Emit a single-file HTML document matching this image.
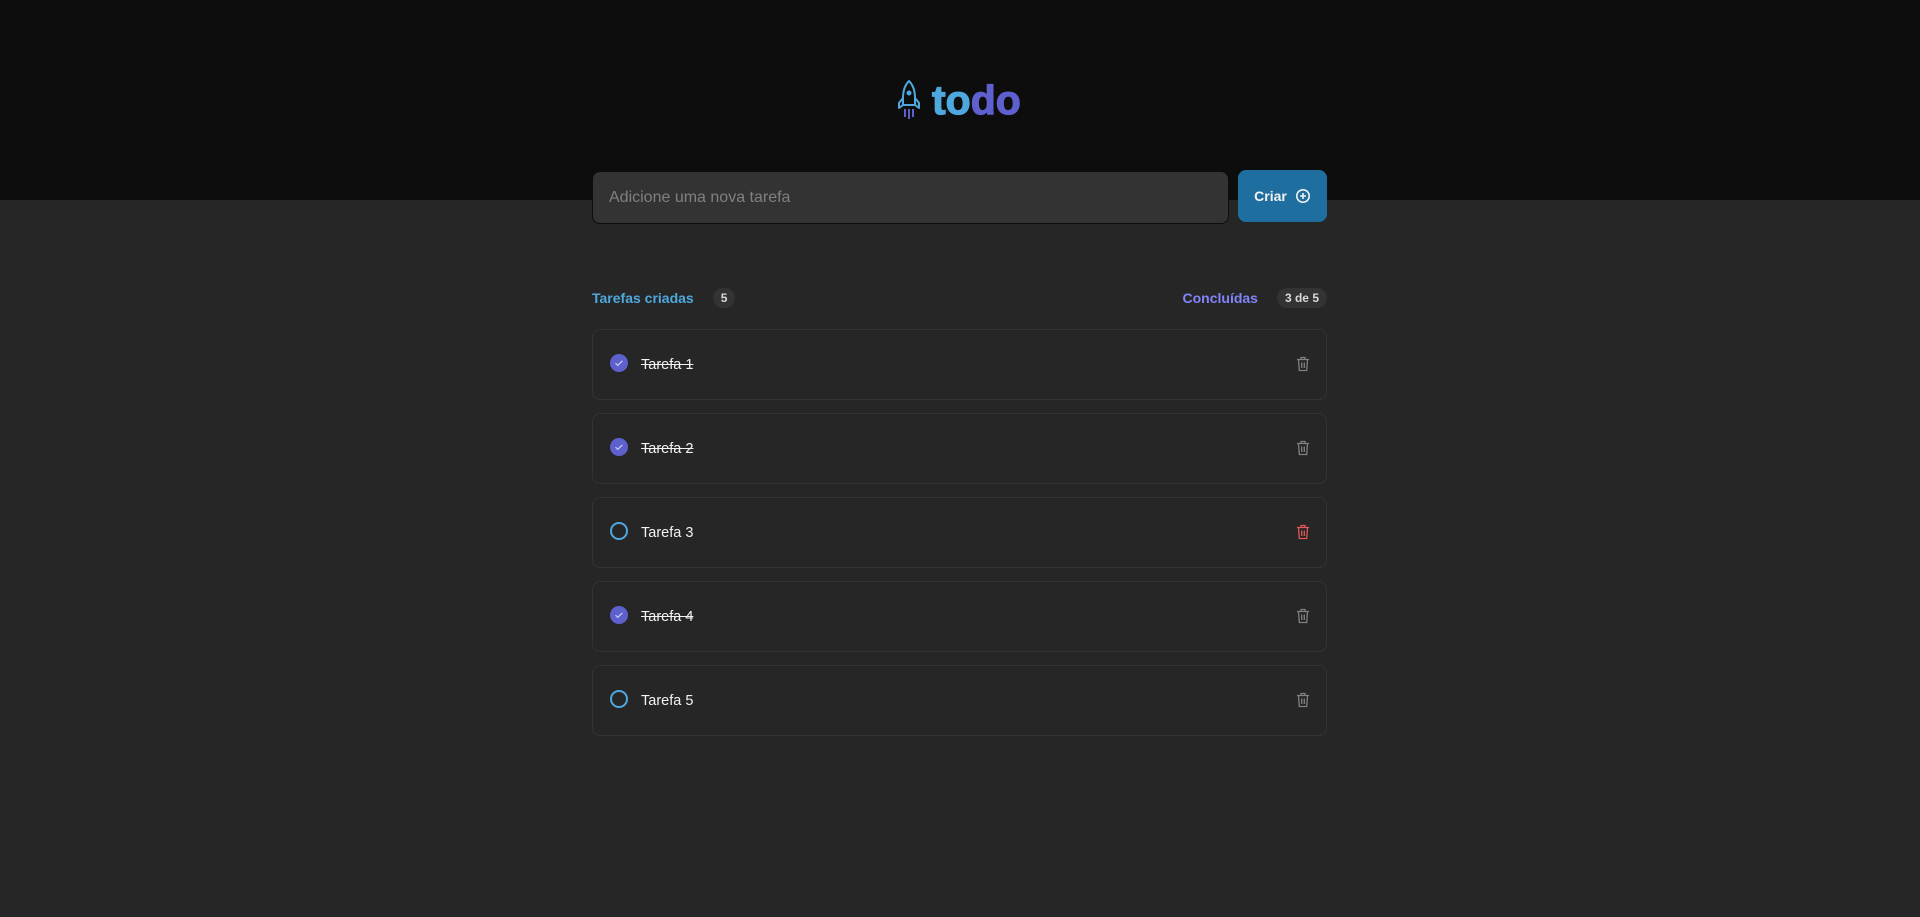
<!DOCTYPE html>
<html><head><meta charset="utf-8"><style>
*{box-sizing:border-box;margin:0;padding:0}
body{width:1920px;height:917px;background:#262626;font-family:"Liberation Sans",sans-serif;position:relative;overflow:hidden}
.hdr{position:absolute;left:0;top:0;width:1920px;height:200px;background:#0d0d0d}
.logo{position:absolute;left:897px;top:76px;display:flex;align-items:center}
.logo .t{font-size:41px;font-weight:900;letter-spacing:0px;margin-left:11px;line-height:48px;-webkit-text-stroke:1.2px currentColor}
.inp{position:absolute;left:592px;top:171px;width:637px;height:53px;background:#333;border:1px solid #0d0d0d;border-radius:8px;color:#808080;font-size:16px;padding:17px 16px}
.btn{position:absolute;left:1238px;top:170px;width:89px;height:52px;background:#1e6f9f;border-radius:8px;color:#f2f2f2;font-weight:700;font-size:14px;display:flex;align-items:center;justify-content:center;gap:8px}
.stats{position:absolute;top:288px;font-size:14px;font-weight:700;display:flex;align-items:center}
.badge{background:#333;color:#d9d9d9;border-radius:999px;font-size:12px;padding:3px 8px;margin-left:19px}
.card{position:absolute;left:592px;width:735px;height:71px;background:#262626;border:1px solid #333;border-radius:8px}
.chk{position:absolute;left:17px;top:24px;width:18px;height:18px;border-radius:50%}
.on{background:#5e60ce}
.off{border:2px solid #4ea8de}
.txt{position:absolute;left:48px;top:27px;color:#f2f2f2;font-size:14.5px}
.done{text-decoration:line-through}
.tr{position:absolute;left:703px;top:26px}
</style></head><body>
<div class="hdr"></div>
<div class="logo">
<svg width="24" height="42" viewBox="0 0 24 42" fill="none">
<path d="M12 2 C7 7 6 13 6 19 L6 26 L18 26 L18 19 C18 13 17 7 12 2Z" stroke="#4ea8de" stroke-width="2" stroke-linejoin="round"/>
<path d="M6 19 L2 24 L2 29 L6 26 M18 19 L22 24 L22 29 L18 26" stroke="#4ea8de" stroke-width="2" stroke-linejoin="round"/>
<circle cx="12" cy="14" r="2.5" fill="#4ea8de"/>
<path d="M8 30 V38 M12 30 V40 M16 30 V38" stroke="#5e60ce" stroke-width="2"/>
</svg>
<span class="t"><span style="color:#4ea8de">to</span><span style="color:#5e60ce">do</span></span>
</div>
<div class="inp">Adicione uma nova tarefa</div>
<div class="btn">Criar <svg width="16" height="16" viewBox="0 0 16 16" fill="none" stroke="#f2f2f2" stroke-width="1.6"><circle cx="8" cy="8" r="6.2"/><path d="M8 5v6M5 8h6"/></svg></div>
<div class="stats" style="left:592px;color:#4ea8de">Tarefas criadas<span class="badge">5</span></div>
<div class="stats" style="right:593px;color:#8284fa">Concluídas<span class="badge">3 de 5</span></div>

<div class="card" style="top:329px"><div class="chk on"><svg width="18" height="18" viewBox="0 0 18 18"><path d="M5.5 9.2l2.3 2.2 4.6-4.6" stroke="#c8c8f0" stroke-width="1.3" fill="none"/></svg></div><div class="txt done">Tarefa 1</div><svg class="tr" width="14" height="16" viewBox="0 0 14 16" fill="none" stroke="#808080" stroke-width="1.3"><path d="M1 3.5h12M5 3.5V1.5h4v2M2.5 3.5l.8 11h7.4l.8-11M5.7 6.5v5.5M8.3 6.5v5.5"/></svg></div>
<div class="card" style="top:413px"><div class="chk on"><svg width="18" height="18" viewBox="0 0 18 18"><path d="M5.5 9.2l2.3 2.2 4.6-4.6" stroke="#c8c8f0" stroke-width="1.3" fill="none"/></svg></div><div class="txt done">Tarefa 2</div><svg class="tr" width="14" height="16" viewBox="0 0 14 16" fill="none" stroke="#808080" stroke-width="1.3"><path d="M1 3.5h12M5 3.5V1.5h4v2M2.5 3.5l.8 11h7.4l.8-11M5.7 6.5v5.5M8.3 6.5v5.5"/></svg></div>
<div class="card" style="top:497px"><div class="chk off"></div><div class="txt">Tarefa 3</div><svg class="tr" width="14" height="16" viewBox="0 0 14 16" fill="none" stroke="#e25858" stroke-width="1.3"><path d="M1 3.5h12M5 3.5V1.5h4v2M2.5 3.5l.8 11h7.4l.8-11M5.7 6.5v5.5M8.3 6.5v5.5"/></svg></div>
<div class="card" style="top:581px"><div class="chk on"><svg width="18" height="18" viewBox="0 0 18 18"><path d="M5.5 9.2l2.3 2.2 4.6-4.6" stroke="#c8c8f0" stroke-width="1.3" fill="none"/></svg></div><div class="txt done">Tarefa 4</div><svg class="tr" width="14" height="16" viewBox="0 0 14 16" fill="none" stroke="#808080" stroke-width="1.3"><path d="M1 3.5h12M5 3.5V1.5h4v2M2.5 3.5l.8 11h7.4l.8-11M5.7 6.5v5.5M8.3 6.5v5.5"/></svg></div>
<div class="card" style="top:665px"><div class="chk off"></div><div class="txt">Tarefa 5</div><svg class="tr" width="14" height="16" viewBox="0 0 14 16" fill="none" stroke="#808080" stroke-width="1.3"><path d="M1 3.5h12M5 3.5V1.5h4v2M2.5 3.5l.8 11h7.4l.8-11M5.7 6.5v5.5M8.3 6.5v5.5"/></svg></div>
</body></html>
